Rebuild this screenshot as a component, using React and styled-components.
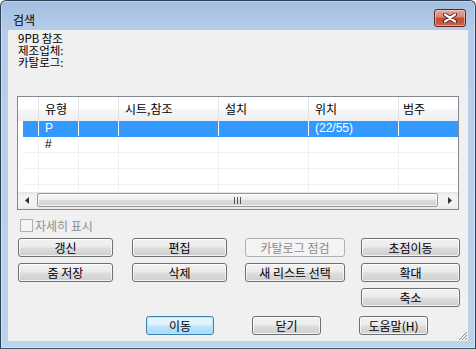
import styled, { createGlobalStyle, css } from "styled-components";

const GlobalStyle = createGlobalStyle`
  html, body {
    margin: 0;
    padding: 0;
    background: #ffffff;
  }
  body {
    font-family: "Liberation Sans", "Noto Sans CJK KR", sans-serif;
    font-size: 12px;
    color: #000;
  }
`;

const columns = [
  { id: "type", label: "유형", width: 40 },
  { id: "blank", label: "", width: 40 },
  { id: "sheet", label: "시트,참조", width: 100 },
  { id: "install", label: "설치", width: 90 },
  { id: "pos", label: "위치", width: 90 },
  { id: "cat", label: "범주", width: 0 },
];

const rows = [
  { id: 1, selected: true, cells: ["P", "", "", "", "(22/55)", ""] },
  { id: 2, cells: ["#", "", "", "", "", ""] },
  { id: 3, cells: ["", "", "", "", "", ""] },
  { id: 4, cells: ["", "", "", "", "", ""] },
  { id: 5, cells: ["", "", "", "", "", ""] },
];

const template = (lead) =>
  `${lead}px ` + columns.map((c) => (c.width ? `${c.width}px` : "1fr")).join(" ");

const Window = styled.div`
  box-sizing: border-box;
  width: 476px;
  height: 349px;
  border: 1px solid #2f4058;
  border-bottom-color: #3a5a6a;
  border-radius: 6px 6px 0 0;
  background: linear-gradient(to bottom, #a2bedf 0, #b5cdea 30px, #bcd3ed 100%);
  box-shadow: inset 0 0 0 1px rgba(255, 255, 255, 0.35);
  padding: 0 7px 7px 7px;
  display: flex;
  flex-direction: column;
  overflow: hidden;
`;

const TitleBar = styled.div`
  height: 29px;
  display: flex;
  justify-content: space-between;
  align-items: flex-start;
  margin: 0 2px 0 5px;
`;

const Title = styled.span`
  margin-top: 12px;
  line-height: 14px;
  font-family: "Noto Sans CJK KR", sans-serif;
  font-size: 12px;
`;

const CloseButton = styled.div`
  box-sizing: border-box;
  margin-top: 8px;
  width: 32px;
  height: 18px;
  border: 1px solid #5b2424;
  border-radius: 3px;
  background: linear-gradient(to bottom, #e6a99c 0%, #d48676 45%, #c24a34 50%, #cf5e44 100%);
  box-shadow: inset 0 0 0 1px rgba(255, 220, 210, 0.55);
  display: flex;
  align-items: center;
  justify-content: center;
`;

const Content = styled.div`
  position: relative;
  flex: 1;
  background: #f0f0f0;
  padding: 2px 9px 0 10px;
  display: flex;
  flex-direction: column;
`;

const Info = styled.div`
  font-family: "Noto Sans CJK KR", sans-serif;
  font-size: 11.5px;
`;

const InfoLine = styled.div`
  height: 12px;
  line-height: 12px;
  overflow: visible;
`;

const ListBox = styled.div`
  margin: 28px 0 0 -1px;
  box-sizing: border-box;
  height: 114px;
  border: 1px solid #828790;
  background: #fff;
  display: flex;
  flex-direction: column;
  overflow: hidden;
`;

const GridRow = styled.div`
  display: grid;
  grid-template-columns: ${(p) => template(p.$lead)};
  margin-left: ${(p) => 21 - p.$lead}px;
`;

const HeaderRow = styled(GridRow)`
  height: 24px;
  background: linear-gradient(to bottom, #ffffff 0%, #ffffff 45%, #f5f6f7 55%, #eff0f2 100%);
`;

const HeaderCell = styled.div`
  border-right: 1px solid #e3e4e6;
  padding-left: 6px;
  line-height: 24px;
  font-family: "Noto Sans CJK KR", sans-serif;
  white-space: nowrap;
  &:last-child {
    border-right: none;
    padding-left: 4px;
  }
`;

const Body = styled.div`
  flex: 1;
  overflow: hidden;
`;

const BodyRow = styled(GridRow)`
  height: 16px;
  box-sizing: border-box;
  border-bottom: 1px solid #f0f0f0;
  ${(p) =>
    p.$selected &&
    css`
      background: #3399ff;
      color: #fff;
      border-bottom-color: #3399ff;
    `}
`;

const Cell = styled.div`
  border-right: 1px solid ${(p) => (p.$selected ? "#ffffff" : "#f0f0f0")};
  padding-left: 6px;
  line-height: 15px;
  white-space: nowrap;
  &:last-child {
    border-right: none;
  }
`;

const ScrollBar = styled.div`
  height: 17px;
  display: flex;
  background: linear-gradient(to bottom, #e4e4e4 0%, #f2f2f2 20%, #f2f2f2 80%, #e8e8e8 100%);
`;

const Arrow = styled.div`
  width: 17px;
  display: flex;
  align-items: center;
  justify-content: center;
`;

const Thumb = styled.div`
  flex: 1;
  margin: 1px 3px 2px 2px;
  box-sizing: border-box;
  border: 1px solid #979797;
  border-radius: 2px;
  background: linear-gradient(to bottom, #f7f7f7 0%, #ececec 50%, #dcdcdc 51%, #d2d2d2 100%);
  box-shadow: inset 0 0 0 1px rgba(255, 255, 255, 0.7);
  display: flex;
  align-items: center;
  justify-content: center;
`;

const Check = styled.label`
  margin: 9px 0 0 2px;
  height: 13px;
  display: flex;
  align-items: center;
  gap: 2px;
  color: #8e8e8e;
  font-family: "Noto Sans CJK KR", sans-serif;
  line-height: 13px;
`;

const Box = styled.span`
  box-sizing: border-box;
  width: 13px;
  height: 13px;
  border: 1px solid #b1b1b1;
  background: #f4f4f4;
`;

const ButtonGrid = styled.div`
  margin-top: 6px;
  display: grid;
  grid-template-columns: 114px 113px 116px 1fr;
  grid-auto-rows: 19px;
  row-gap: 6px;
`;

const Button = styled.div`
  box-sizing: border-box;
  width: ${(p) => p.$w}px;
  height: 19px;
  grid-column: ${(p) => p.$col || "auto"};
  border: 1px solid #707070;
  border-radius: 3px;
  background: linear-gradient(to bottom, #f2f2f2 0%, #ebebeb 48%, #dddddd 52%, #cfcfcf 100%);
  box-shadow: inset 0 0 0 1px rgba(255, 255, 255, 0.75);
  display: flex;
  align-items: center;
  justify-content: center;
  font-family: "Noto Sans CJK KR", sans-serif;
  font-size: 12px;
  line-height: 17px;
  color: #000;
  white-space: nowrap;
  ${(p) =>
    p.$disabled &&
    css`
      border-color: #adb2b5;
      background: #f4f4f4;
      box-shadow: none;
      color: #8a8a8a;
    `}
  ${(p) =>
    p.$default &&
    css`
      border-color: #3c7fb1;
      background: linear-gradient(to bottom, #eaf6fd 0%, #d9f0fc 48%, #bee6fd 52%, #a7d9f5 100%);
      box-shadow: inset 0 0 0 1px rgba(180, 230, 255, 0.9);
    `}
`;

const BottomRow = styled.div`
  margin: 9px 0 0 128px;
  display: flex;
  gap: 38px;
`;

const Grip = styled.svg`
  position: absolute;
  right: 1px;
  bottom: 1px;
`;

const XIcon = () => (
  <svg width="14" height="10" viewBox="0 0 14 10">
    <path d="M2 1.5 L12 8.5 M12 1.5 L2 8.5" stroke="#4a2020" strokeWidth="4" strokeLinecap="round" />
    <path d="M2 1.5 L12 8.5 M12 1.5 L2 8.5" stroke="#ffffff" strokeWidth="2.2" strokeLinecap="round" />
  </svg>
);

const TriLeft = () => (
  <svg width="4" height="7" viewBox="0 0 4 7">
    <path d="M4 0 L0 3.5 L4 7 Z" fill="#333" />
  </svg>
);

const TriRight = () => (
  <svg width="4" height="7" viewBox="0 0 4 7">
    <path d="M0 0 L4 3.5 L0 7 Z" fill="#333" />
  </svg>
);

const buttons = [
  { label: "갱신", w: 95 },
  { label: "편집", w: 95 },
  { label: "카탈로그 점검", w: 100, disabled: true },
  { label: "초점이동", w: 99 },
  { label: "줌 저장", w: 95 },
  { label: "삭제", w: 95 },
  { label: "새 리스트 선택", w: 100 },
  { label: "확대", w: 99 },
  { label: "축소", w: 99, col: 4 },
];

export default function App() {
  return (
    <>
      <GlobalStyle />
      <Window>
        <TitleBar>
          <Title>검색</Title>
          <CloseButton>
            <XIcon />
          </CloseButton>
        </TitleBar>
        <Content>
          <Info>
            <InfoLine>9PB 참조</InfoLine>
            <InfoLine>제조업체:</InfoLine>
            <InfoLine>카탈로그:</InfoLine>
          </Info>
          <ListBox>
            <HeaderRow $lead={21}>
              <HeaderCell />
              {columns.map((c) => (
                <HeaderCell key={c.id}>{c.label}</HeaderCell>
              ))}
            </HeaderRow>
            <Body>
              {rows.map((r) => (
                <BodyRow key={r.id} $lead={16} $selected={r.selected}>
                  <Cell $selected={r.selected} />
                  {r.cells.map((v, i) => (
                    <Cell key={i} $selected={r.selected}>
                      {v}
                    </Cell>
                  ))}
                </BodyRow>
              ))}
            </Body>
            <ScrollBar>
              <Arrow>
                <TriLeft />
              </Arrow>
              <Thumb>
                <svg width="7" height="7" viewBox="0 0 7 7">
                  <path d="M0.5 0 V7 M3.5 0 V7 M6.5 0 V7" stroke="#555" strokeWidth="1" />
                </svg>
              </Thumb>
              <Arrow>
                <TriRight />
              </Arrow>
            </ScrollBar>
          </ListBox>
          <Check>
            <Box />
            자세히 표시
          </Check>
          <ButtonGrid>
            {buttons.map((b) => (
              <Button key={b.label} $w={b.w} $col={b.col} $disabled={b.disabled}>
                {b.label}
              </Button>
            ))}
          </ButtonGrid>
          <BottomRow>
            <Button $w={68} $default>
              이동
            </Button>
            <Button $w={69}>닫기</Button>
            <Button $w={69}>도움말(H)</Button>
          </BottomRow>
          <Grip width="9" height="9" viewBox="0 0 9 9">
            <path d="M1 9 L9 1 M4 9 L9 4 M7 9 L9 7" stroke="#8a8a8a" strokeWidth="1" />
          </Grip>
        </Content>
      </Window>
    </>
  );
}
